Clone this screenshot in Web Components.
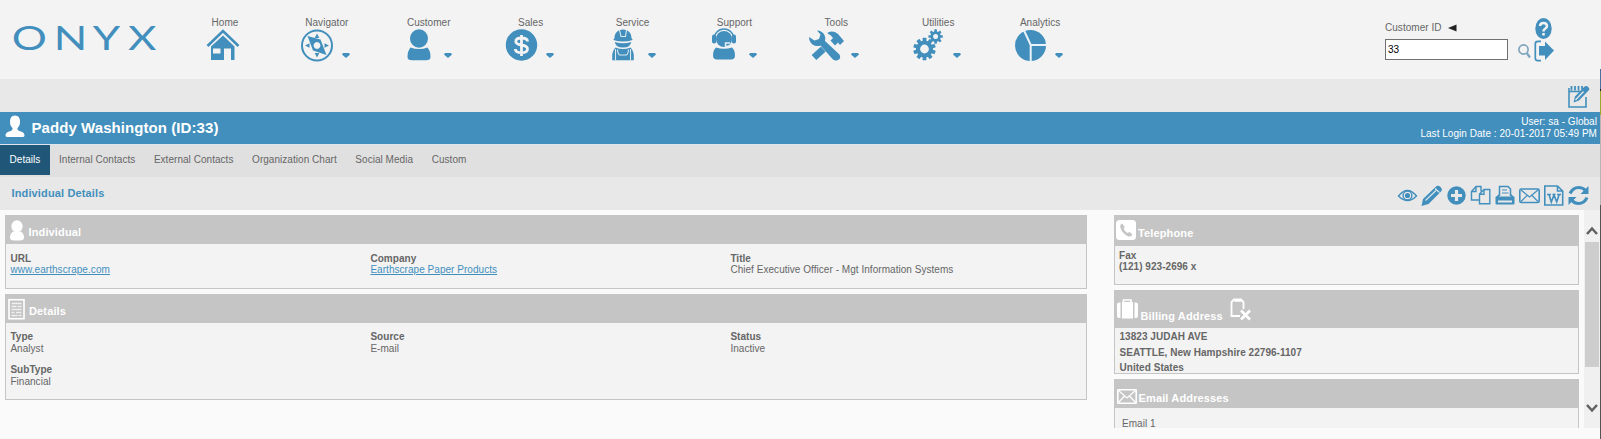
<!DOCTYPE html>
<html lang="en">
<head>
<meta charset="utf-8">
<title>ONYX</title>
<style>
html,body{margin:0;height:439px;overflow:hidden;background:#fafafa}
body{font:10px/12px "Liberation Sans",Arial,sans-serif;color:#666;letter-spacing:.04px}
</style>
</head>
<body>
<onyx-app></onyx-app>
<script>
const B = '#428fbd';
const gear = (cx, cy, r, n, tw, tl, hole) => {
  let t = '';
  for (let i = 0; i < n; i++) t += `<rect x="${cx - tw / 2}" y="${cy - r - tl}" width="${tw}" height="${tl + 2}" rx=".5" transform="rotate(${i * 360 / n} ${cx} ${cy})"/>`;
  return t + `<circle cx="${cx}" cy="${cy}" r="${(r + hole) / 2}" fill="none" stroke="currentColor" stroke-width="${r - hole}"/>`;
};
const ICONS = {
  home: [34, 34, `<path d="M1.500 17 17 2 32.500 17" fill="none" stroke="currentColor" stroke-width="2.600"/><path fill-rule="evenodd" d="M17 6.500 28.500 17.500V31H25V19.500H18V31H5V17.500ZM7 19.500V24.500H14.500V19.500Z"/>`],
  compass: [34, 34, `<circle cx="17" cy="16.500" r="15" fill="none" stroke="currentColor" stroke-width="2"/><path fill-rule="evenodd" d="M7.500 7 20.500 10.500 26.500 26 13 21.500ZM17 13.100a3.400 3.400 0 1 0 .01 0Z"/><path d="M17 4.500 19.300 9H14.700ZM17 28.500 19.300 24H14.700ZM5 16.500 9.500 14.200V18.800ZM29 16.500 24.500 14.200V18.800Z"/>`],
  person: [34, 34, `<ellipse cx="17" cy="9.500" rx="9" ry="9.200"/><path d="M8.500 18.500Q17 21.500 25.500 18.500 28.500 22 28.500 28 28.500 31.300 24 31.300H10Q5.500 31.300 5.500 28 5.500 22 8.500 18.500Z"/>`],
  dollar: [34, 34, `<circle cx="17.500" cy="16" r="15.700"/><path d="M23.500 12.500C23.500 10 21 9 17.500 9S11.800 10 11.800 12.500s2.500 3 5.700 3.500 6 1.300 6 4-2.500 3.700-6 3.700-6.200-1.200-6.200-3.700M17.500 6V27" fill="none" stroke="#f3f3f3" stroke-width="2.800"/>`],
  worker: [34, 34, `<path d="M8.500 9C8.500 4 12 .5 17 .5S25.500 4 25.500 9L26.700 11Q17 14 7.300 11Z"/><path d="M8.800 13Q17 15.500 25.200 13 24.500 18.500 17 18.500T8.800 13Z"/><path d="M9.500 18.500Q17 21.500 24.500 18.500 27.800 22 27.800 27V31.300H6.200V27Q6.200 22 9.500 18.500Z"/><path d="M13.500 1 15 7.500H19.500L20.500 1M9.500 20V31M24.500 20V31M11.500 20.500Q12 26 14 26H20Q22 26 22.500 20.500" fill="none" stroke="#dceaf2" stroke-width="1.100"/>`],
  agent: [34, 34, `<circle cx="17" cy="10" r="8"/><path d="M7 10A10 10 0 0 1 27 10" fill="none" stroke="currentColor" stroke-width="1.400"/><rect x="5" y="5.500" width="4.200" height="9" rx="2"/><rect x="24.800" y="5.500" width="4.200" height="9" rx="2"/><path d="M9 18.500Q17 21 25 18.500 28 21 28 26.500 28 30.500 24 30.500H10Q6 30.500 6 26.500 6 21 9 18.500Z"/><path d="M25 15Q23 17.500 18.500 17.500V14H23" fill="none" stroke="#e8f1f6" stroke-width="1.400"/>`],
  tools: [36, 34, `<path d="M6 28.500 22 14" stroke="currentColor" stroke-width="7"/><path d="M20 3.500Q25 1 30 5L36 12 32 16 30 13.500 27 16.500 22.500 11.500 25 9Q23 5.500 19.500 4.500Z"/><path d="M11 8 29.500 28" stroke="#f3f3f3" stroke-width="10"/><path d="M9 1.500Q14 1.500 16.500 6 18 9.500 17 12L31.500 25.500Q33 28.500 31 30.500 28 32.500 25 30.500L12.500 16.500Q8 18 4.500 15.500 1 13 1 8L6.500 11.500 11 10 12.500 5.500Z"/>`],
  gears: [34, 34, gear(13.5, 20, 8.600, 10, 3.8, 2.6, 4.4) + gear(24.6, 7.5, 5.2, 8, 2.6, 2, 2.5)],
  pie: [34, 34, `<circle cx="17.500" cy="16.500" r="15.500"/><path d="M11 1.500 17.700 16H34M17.700 16V33" fill="none" stroke="#e8f2f8" stroke-width="2"/>`],
  caret: [8, 5, `<path d="M1 0H7L8 1.500 4 5 0 1.500Z"/>`],
  tri: [9, 8, `<path d="M0 4 8.500 .5V7.500Z"/>`],
  search: [14, 16, `<circle cx="5.500" cy="5.500" r="4.600" fill="none" stroke="currentColor" stroke-width="1.700"/><path d="M8.700 9 12 13.500" stroke="currentColor" stroke-width="2.200"/>`],
  help: [18, 22, `<ellipse cx="8.500" cy="10.500" rx="8.200" ry="10.500"/><path d="M5 8Q5.300 5 8.500 5T12 8Q12 9.700 9.800 11 8.500 11.800 8.500 13.500M8.500 15V17.500" fill="none" stroke="#f3f3f3" stroke-width="2.500"/>`],
  exit: [20, 22, `<path d="M7 1.300H4Q1.300 1.300 1.300 4V18Q1.300 20.700 4 20.700H7" fill="none" stroke="currentColor" stroke-width="1.700"/><path d="M5 6H11V1.500L20 10.500 11 20V15.500H5Z"/>`],
  note: [23, 24, `<path d="M16 4H18M1 3V22H18V12M1 6.500H14" fill="none" stroke="currentColor" stroke-width="1.600"/><path d="M3.500 1V5.500M7 1V5.500M10.500 1V5.500M14 1V4.500" stroke="currentColor" stroke-width="1.800"/><path d="M5.500 17.500 7 11.500 16.500 1.500Q20-.5 21.500 4.500L11 15.500Z"/><path d="M7.500 15 15.500 6.500" stroke="#e8e8e8" stroke-width="1.300"/>`],
  eye: [22, 22, `<path d="M1.500 11Q10.500 0 19.500 11 10.500 20 1.500 11Z" fill="none" stroke="currentColor" stroke-width="1.400"/><circle cx="10.500" cy="10.500" r="4.400" fill="none" stroke="currentColor" stroke-width="1.400"/><circle cx="10.500" cy="10.500" r="2.600"/>`],
  pencil: [22, 22, `<path d="M.5 21 2 14 14.500 2Q17-.5 19.500 2 22 4.500 20 6.500L7.500 19Z"/><path d="M4.500 15.500 15 5.500M14 3.500 18.500 7.500" stroke="#dfeaf1" stroke-width="1.100"/>`],
  plus: [22, 22, `<circle cx="10.500" cy="10.500" r="9.200"/><path d="M10.500 5V16M5 10.500H16" stroke="#e8e8e8" stroke-width="3.200"/>`],
  copy: [22, 22, `<path d="M9 15H1.500V6.500L6 1.500H11V6.500M1.500 6.500H6V1.500M9.500 18.700V9L14 4.500H19.800V18.700ZM9.500 9.200H14V4.500" fill="none" stroke="currentColor" stroke-width="1.400"/>`],
  print: [22, 22, `<path d="M4.500 11V1.500H13L15.500 4V11" fill="none" stroke="currentColor" stroke-width="1.500"/><path d="M7 5H12M7 8H13.500" stroke="currentColor" stroke-width="1.200"/><path fill-rule="evenodd" d="M2.500 10.500 4 9V11.500H16V9L17.500 10.500 19.500 12V18.500Q19.500 19.500 18.500 19.500H1.500Q.5 19.500 .5 18.500V12ZM3 15.500V17.500H17V15.500Z"/>`],
  mail: [22, 22, `<rect x=".8" y="4" width="19.400" height="13.500" rx="1.500" fill="none" stroke="currentColor" stroke-width="1.600"/><path d="M2 5 10.500 12 19 5M2 16.500 8 10.500M19 16.500 13 10.500" fill="none" stroke="currentColor" stroke-width="1.200"/>`],
  word: [22, 22, `<path d="M.8 1H13.500L18.700 6V20H.8ZM13.500 1V6H18.700" fill="none" stroke="currentColor" stroke-width="1.600"/><path d="M3 9.500H7M8.500 9.500H11.500M13 9.500H17M5 9.500 7.300 17 10 10 12.700 17 15.200 9.500" fill="none" stroke="currentColor" stroke-width="1.600"/>`],
  refresh: [22, 22, `<path d="M2 8.500Q5 2.500 10.500 2.500 15 2.500 17.500 5.500M19 12.500Q16.500 18.500 10.500 18.500 6.500 18.500 4 15.500" fill="none" stroke="currentColor" stroke-width="3.200"/><path d="M20.500 1V9H12.500ZM.5 20V12H8.500Z"/>`],
  bust: [20, 23, `<path d="M10 .5Q15 .5 15 6.500 15 11 12.500 13 12 15.500 16 16.500 19.500 17.500 19.500 20.500 19.500 22 17.500 22H2.500Q.5 22 .5 20.500 .5 17.500 4 16.500 8 15.500 7.500 13 5 11 5 6.500 5 .5 10 .5Z"/>`],
  bust2: [16, 22, `<ellipse cx="8" cy="6.300" rx="5.600" ry="6.100"/><path d="M4 11.500H12Q15 13.500 15 17.500 15 20.500 11 20.500H5Q1 20.500 1 17.500 1 13.500 4 11.500Z"/>`],
  sheet: [18, 22, `<rect x="1" y=".7" width="15" height="19" fill="none" stroke="currentColor" stroke-width="1.600"/><path d="M3.500 4.500H13.500M3.500 7.500H8.500M9.500 7.500H13.500M3.500 10.500H13.500M3.500 13.500H6.500M8 13.500H13.500M3.500 16.500H9.500M10.500 16.500H13.500" stroke="currentColor" stroke-width="1.500" opacity=".75"/>`],
  phone: [20, 20, `<rect width="20" height="20" rx="3.500"/><path d="M6 3.500Q3.500 5 4.500 8 7 14.500 12.500 16.500 15.500 17 16.500 14.500L13.500 12 11.500 13Q8.500 11.500 7.700 8.500L8.800 7Z" fill="#c5c5c5"/>`],
  bag: [21, 21, `<path d="M6.500 3.500V1H14V3.500" fill="none" stroke="currentColor" stroke-width="1.700"/><path d="M5 3H16V19.500H5ZM0 5.500Q0 3.500 2 3.500H3.500V19H2Q0 19 0 17ZM17.500 3.500H19Q21 3.500 21 5.500V17Q21 19 19 19H17.500Z"/>`],
  clip: [22, 23, `<path d="M10 18H1.500V4L4 1.500H11L13.500 4V11" fill="none" stroke="currentColor" stroke-width="1.800"/><path d="M4 3.800 5 1H10.500L12 3.800Z"/><path d="M11 12.500 20 21.500M20 12.500 11 21.500" stroke="currentColor" stroke-width="2.600"/>`],
  envelope: [20, 15, `<rect x=".8" y=".8" width="18.400" height="13.400" rx=".5" fill="none" stroke="currentColor" stroke-width="1.600"/><path d="M1.500 1.500 10 9 18.500 1.500M1.500 13.500 7.500 7M18.500 13.500 12.500 7" fill="none" stroke="currentColor" stroke-width="1.200"/>`],
  up: [12, 9, `<path d="M1 8 6 2.500 11 8" fill="none" stroke="currentColor" stroke-width="2.500"/>`],
  down: [12, 9, `<path d="M1 1 6 6.500 11 1" fill="none" stroke="currentColor" stroke-width="2.500"/>`]
};
const define = (name, html, after) => {
  const t = document.createElement('template');
  t.innerHTML = html;
  customElements.define(name, class extends HTMLElement {
    connectedCallback() {
      if (this.shadowRoot) return;
      this.attachShadow({ mode: 'open' }).append(t.content.cloneNode(true));
      if (after) after.call(this, this.shadowRoot);
    }
  });
};

define('onyx-icon', `<style>:host{display:block;flex:none}svg{display:block;fill:currentColor;overflow:visible}</style><div></div>`, function (r) {
  const [w, h, p] = ICONS[this.getAttribute('name')];
  r.querySelector('div').innerHTML = `<svg width="${w}" height="${h}" viewBox="0 0 ${w} ${h}">${p}</svg>`;
});

define('onyx-logo', `<style>:host{display:block;width:174px;height:79px;flex:none}svg{display:block}</style>
<svg width="174" height="79"><text transform="translate(0 50.200) scale(1.330 1)" x="8.900 40.400 69.700 96.200" y="0" font-family="Lato" font-size="33" fill="#428fbd">ONYX</text></svg>`);

define('nav-item', `<style>:host{display:block;width:101.900px;flex:none}
.t{text-align:center;padding-top:16.500px;line-height:12px}
.g{display:flex;padding-left:24px;gap:8px;color:${B}}
.i{width:34px;display:flex;justify-content:center}.c{padding-top:24px}
:host([solo]) .g{padding-left:32px}:host([solo]) .c{display:none}</style>
<div class="t"><slot></slot></div><div class="g"><div class="i"></div><onyx-icon class="c" name="caret"></onyx-icon></div>`, function (r) {
  const i = document.createElement('onyx-icon');
  i.setAttribute('name', this.getAttribute('icon'));
  r.querySelector('.i').append(i);
});

define('customer-search', `<style>:host{display:flex;margin-left:auto;width:215px;color:${B}}
.f{width:132.500px;padding-top:22px;color:#666}.l{display:flex;gap:6px;height:17px;align-items:flex-start}.l onyx-icon{color:#222;padding-top:1.500px}
.box{box-sizing:border-box;width:123px;height:21px;border:1px solid #707070;background:#fff;color:#000;padding:4px 2px;line-height:12px}
.s{padding-top:43.500px;width:16px;color:#7fa5bd}.r{padding-top:18px;display:flex;flex-direction:column}.r onyx-icon:first-child{margin-left:1.500px}</style>
<div class="f"><div class="l"><span>Customer ID</span><onyx-icon name="tri"></onyx-icon></div><div class="box">33</div></div>
<onyx-icon class="s" name="search"></onyx-icon>
<div class="r"><onyx-icon name="help"></onyx-icon><onyx-icon name="exit"></onyx-icon></div>`);

define('app-header', `<style>:host{display:flex;height:79px;background:#f3f3f3}</style>
<onyx-logo></onyx-logo>
<nav-item solo icon="home">Home</nav-item><nav-item icon="compass">Navigator</nav-item><nav-item icon="person">Customer</nav-item><nav-item icon="dollar">Sales</nav-item><nav-item icon="worker">Service</nav-item><nav-item icon="agent">Support</nav-item><nav-item icon="tools">Tools</nav-item><nav-item icon="gears">Utilities</nav-item><nav-item icon="pie">Analytics</nav-item>
<customer-search></customer-search>`);

define('note-strip', `<style>:host{display:flex;justify-content:flex-end;box-sizing:border-box;height:33px;background:#e8e8e8;color:${B};padding:6px 9px 0 0}</style><onyx-icon name="note"></onyx-icon>`);

define('record-bar', `<style>:host{display:flex;height:32px;background:${B};color:#fff;border-bottom:1px solid #dce6ec}
onyx-icon{margin:3px 7px 0 4.500px}.n{font:bold 15px/32px "Liberation Sans",Arial,sans-serif;letter-spacing:.07px}.u{margin:4px 3px 0 auto;text-align:right}</style>
<onyx-icon name="bust"></onyx-icon><div class="n"><slot></slot></div><div class="u">User: sa - Global<br>Last Login Date : 20-01-2017 05:49 PM</div>`);

define('tab-bar', `<style>:host{display:flex;height:32px;background:#e0e0e0}
span{height:30px;line-height:30px;margin-right:18.600px;color:#666}.on{background:#205779;color:#fff;width:50px;text-align:center;margin-right:9px}</style>
<span class="on">Details</span><span>Internal Contacts</span><span>External Contacts</span><span>Organization Chart</span><span>Social Media</span><span>Custom</span>`);

define('section-bar', `<style>:host{display:flex;height:33px;background:#e8e8e8;color:${B}}
b{font-size:11px;line-height:33px;padding-left:11.500px;letter-spacing:.14px}
.k{display:flex;gap:2.500px;margin:7.500px 10px 0 auto}</style><b><slot></slot></b><div class="k"></div>`, function (r) {
  for (const n of ['eye', 'pencil', 'plus', 'copy', 'print', 'mail', 'word', 'refresh']) {
    const i = document.createElement('onyx-icon'); i.setAttribute('name', n); r.querySelector('.k').append(i);
  }
});

define('info-panel', `<style>:host{display:block;box-sizing:border-box;border:1px solid #c5c5c5;background:#f3f3f3;height:var(--h);flex:none;overflow:hidden}
.h{display:flex;box-sizing:border-box;height:var(--hh);background:#c5c5c5;color:#fff;font:bold 11px/13px "Liberation Sans",Arial,sans-serif;letter-spacing:.14px}
.h span{margin-top:var(--ty)}.a{padding:var(--ip)}</style>
<div class="h"><div class="a"></div><span></span><slot name="extra"></slot></div><slot></slot>`, function (r) {
  r.querySelector('span').textContent = this.getAttribute('heading');
  const i = document.createElement('onyx-icon'); i.setAttribute('name', this.getAttribute('icon')); r.querySelector('.a').append(i);
});

define('data-field', `<style>:host{display:block}b{display:block;height:var(--lh,12px)}::slotted(a){color:${B}}</style><b></b><slot></slot>`, function (r) {
  r.querySelector('b').textContent = this.getAttribute('label');
});

define('scroll-bar', `<style>:host{display:flex;flex-direction:column;align-items:center;width:16px;background:#f0f0f0;height:218px;color:#606060}
.u{padding:15.500px 0 7.500px}.t{width:14px;height:125px;background:#cdcdcd}.d{padding-top:37px}</style>
<onyx-icon class="u" name="up"></onyx-icon><div class="t"></div><onyx-icon class="d" name="down"></onyx-icon>`);

define('onyx-app', `<style>:host{display:grid;grid-template-columns:1600px 1px;height:439px;background:#fafafa}
.edge{background:linear-gradient(#f3f3f3 69px,#4a72a0 69px 89px,#222 89px 91px,#9aa829 91px 115px,#b5b5b5 115px 205px,#555 205px)}
.body{display:grid;grid-template-columns:1082px 465px 16px;padding-left:5px;column-gap:27px}
.col{display:flex;flex-direction:column;gap:5px;padding-top:5px}
.right{height:213px;overflow:hidden}
scroll-bar{margin-left:-22px}
.grid{display:grid;grid-template-columns:360px 360px 1fr;padding-left:4.400px}
.p1{--h:74px;--hh:28px;--ty:9.500px;--ip:4px 3.500px 0 3px}
.p2{--h:106px;--hh:28px;--ty:9.500px;--ip:4px 3px 0 2px;--lh:12px}
.p3{--h:70px;--hh:30px;--ty:10.500px;--ip:4px 2px 0 1px}
.p4{--h:84px;--hh:37px;--ty:18.500px;--ip:8px 2.500px 0 2px}
.p5{--h:84px;--hh:28px;--ty:11.500px;--ip:8.500px 2px 0 1.500px}
.addr{font-weight:bold;padding:1px 0 0 4.500px;line-height:15.500px}
.sub{padding-top:9px}</style>
<div>
<app-header></app-header><note-strip></note-strip><record-bar>Paddy Washington (ID:33)</record-bar><tab-bar></tab-bar><section-bar>Individual Details</section-bar>
<div class="body">
<div class="col">
<info-panel class="p1" heading="Individual" icon="bust2"><div class="grid" style="padding-top:9px;--lh:11px"><data-field label="URL"><a href="#" style="letter-spacing:.06px">www.earthscrape.com</a></data-field><data-field label="Company"><a href="#">Earthscrape Paper Products</a></data-field><data-field label="Title">Chief Executive Officer - Mgt Information Systems</data-field></div></info-panel>
<info-panel class="p2" heading="Details" icon="sheet"><div class="grid" style="padding-top:8px"><data-field label="Type">Analyst</data-field><data-field label="Source">E-mail</data-field><data-field label="Status">Inactive</data-field><data-field class="sub" label="SubType">Financial</data-field></div></info-panel>
</div>
<div class="col right">
<info-panel class="p3" heading="Telephone" icon="phone"><data-field label="Fax" style="padding:4px 0 0 4px;font-weight:bold;--lh:11px">(121) 923-2696 x</data-field></info-panel>
<info-panel class="p4" heading="Billing Address" icon="bag"><onyx-icon slot="extra" name="clip" style="padding:7px 0 0 7px"></onyx-icon><div class="addr">13823 JUDAH AVE<br>SEATTLE, New Hampshire 22796-1107<br>United States</div></info-panel>
<info-panel class="p5" heading="Email Addresses" icon="envelope"><div style="padding:10px 0 0 7px">Email 1</div></info-panel>
</div>
<scroll-bar></scroll-bar>
</div>
</div>
<div class="edge"></div>`);
</script>
</body>
</html>
